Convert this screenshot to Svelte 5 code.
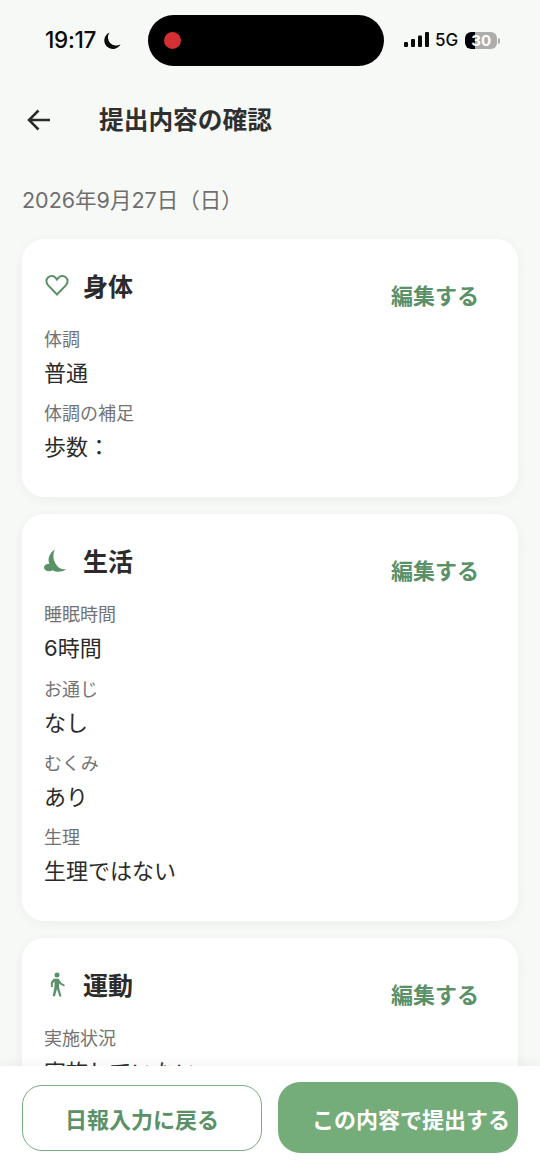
<script>
  const sections = [
    { title: '身体', icon: 'heart', rows: [['体調', '普通'], ['体調の補足', '歩数：']] },
    { title: '生活', icon: 'moon', rows: [['睡眠時間', '6時間'], ['お通じ', 'なし'], ['むくみ', 'あり'], ['生理', '生理ではない']] },
    { title: '運動', icon: 'walk', rows: [['実施状況', '実施していない']] }
  ];
</script>

<div class="screen">
  <div class="status">
    <div class="time">19:17
      <svg class="moon" viewBox="0 0 20 20" width="20" height="20"><path d="M7.5 1.5A8.6 8.6 0 1 0 18.6 13.2 8.2 8.2 0 0 1 7.5 1.5Z" fill="#0b0b0b"/></svg>
    </div>
    <div class="island"><span class="rec"></span></div>
    <div class="right">
      <svg viewBox="0 0 25 16" width="25" height="16"><rect x="0" y="10" width="4" height="5" rx="1"/><rect x="7" y="7" width="4" height="8" rx="1"/><rect x="14" y="3.5" width="4" height="11.5" rx="1"/><rect x="21" y="0" width="4" height="15" rx="1"/></svg>
      <span class="fiveg">5G</span>
      <div class="battery"><span class="level"></span><span class="pct">30</span></div>
      <span class="nub"></span>
    </div>
  </div>

  <div class="header">
    <svg class="back" viewBox="0 0 26 24" width="26" height="24" fill="none" stroke="#2b2b2b" stroke-width="2.5"><path d="M24 12H3M12.5 2.5 3 12l9.5 9.500"/></svg>
    <h1>提出内容の確認</h1>
  </div>

  <div class="content">
    <div class="date">2026年9月27日（日）</div>
    {#each sections as s}
      <section class="card">
        <div class="card-head">
          <div class="title">
            <span class="icon">
              {#if s.icon === 'heart'}
                <svg class="heart" viewBox="0 0 24 24" width="24" height="24" fill="none" stroke="#5a9168" stroke-width="2"><path d="M12 21.500 3.200 12.400C.8 9.900.9 6.200 3.200 4.200c2.300-2 5.900-1.500 7.500.7L12 6.600l1.300-1.700c1.600-2.200 5.200-2.700 7.500-.7 2.300 2 2.400 5.700 0 8.200Z"/></svg>
              {:else if s.icon === 'moon'}
                <svg viewBox="0 0 24 24" width="24" height="24" fill="#5a9168"><path d="M11 1.500C6 4.500 3.500 10 5 15l4 7.500c3.500 2 9 1.500 13.500-1.300-5 .8-8-1.200-10.500-5-3-4.200-3.500-9.500-1-15.200Z"/><ellipse cx="5" cy="19.500" rx="5" ry="3.800"/></svg>
              {:else}
                <svg class="walk" viewBox="0 0 24 30" width="20" height="27" fill="#5a9168"><circle cx="12" cy="3.500" r="3"/><path d="M8 8h6l3 5 4.500 2.500-1 1.800-5.500-3-.5-1v6l3 10h-2.600L12 20.500 9.500 29H6.800L9 18v-6.500l-2 2V18H4.700v-6Z"/></svg>
              {/if}
            </span>
            <h2>{s.title}</h2>
          </div>
          <span class="edit">編集する</span>
        </div>
        <div class="rows">
          {#each s.rows as [label, value]}
            <div class="row">
              <div class="label">{label}</div>
              <div class="value">{value}</div>
            </div>
          {/each}
        </div>
      </section>
    {/each}
  </div>

  <div class="footer">
    <button class="btn ghost">日報入力に戻る</button>
    <button class="btn primary">この内容で提出する</button>
  </div>
</div>

<style>
  :global(body) { margin: 0; background: #f7f9f7; }
  .screen {
    width: 540px; height: 1170px; overflow: hidden; display: flex; flex-direction: column;
    background: #f7f9f7; color: #2b2b2b;
    font-family: Inter, "Noto Sans CJK JP", "Noto Sans", sans-serif;
  }
  .status { display: flex; align-items: center; height: 51px; margin-top: 15px; flex: none; }
  .time {
    display: flex; align-items: center; gap: 6px; width: 148px; box-sizing: border-box; padding-left: 45px; flex: none;
    font: 500 22.500px/1 Inter, "Noto Sans", sans-serif; color: #0b0b0b; white-space: nowrap; letter-spacing: -0.3px;
  }
  .moon { flex: none; }
  .island { width: 236px; height: 51px; border-radius: 26px; background: #000; display: flex; align-items: center; padding-left: 16px; box-sizing: border-box; flex: none; }
  .rec { width: 17px; height: 17px; border-radius: 50%; background: #d42f33; }
  .right { display: flex; align-items: center; margin-left: 20px; color: #0b0b0b; }
  .right svg { fill: #0b0b0b; margin-top: -1px; }
  .fiveg { font: 500 17px/1 Inter, sans-serif; margin-left: 6px; }
  .battery { position: relative; width: 32px; height: 17px; border-radius: 6px; margin-left: 7px; background: #adadad; overflow: hidden; }
  .level { position: absolute; left: 0; top: 0; bottom: 0; width: 10px; background: #000; border-radius: 6px 0 0 6px; }
  .pct { position: absolute; inset: 0; text-align: center; font: 700 15px/17px Inter, sans-serif; color: #fff; }
  .nub { width: 2px; height: 6px; background: #adadad; border-radius: 0 2px 2px 0; margin-left: 1px; }

  .header { display: flex; align-items: center; height: 40px; margin-top: 34px; padding-left: 26px; flex: none; }
  .back { flex: none; }
  h1 { margin: 0 0 0 47px; font-size: 24.700px; line-height: 36px; font-weight: 700; color: #2f2f2f; }

  .content { flex: 1; min-height: 0; overflow: hidden; padding: 0 22px; }
  .date { margin-top: 44px; font-size: 21.500px; line-height: 32px; color: #6f6f6f; margin-bottom: 23px; white-space: nowrap; }
  .card { background: #fff; border-radius: 22px; padding: 30px 22px 32px; margin-bottom: 17px; box-shadow: 0 2px 12px rgba(40, 60, 45, 0.05); }
  .card-head { display: flex; justify-content: space-between; align-items: flex-start; height: 43px; padding-right: 17px; }
  .title { display: flex; align-items: center; height: 36px; }
  .icon { width: 39px; height: 30px; display: flex; align-items: center; margin-top: -4px; }
  .heart { margin-left: 1px; }
  .walk { margin-left: 3px; }
  h2 { margin: 0; font-size: 25px; line-height: 36px; font-weight: 700; color: #2b2b2b; }
  .edit { font-size: 22px; line-height: 32px; font-weight: 700; color: #5a9168; margin-top: 11px; }
  .rows { display: flex; flex-direction: column; gap: 9.300px; margin-top: 14px; }
  .label { font-size: 18px; line-height: 28px; color: #737373; margin-bottom: 1px; }
  .value { font-size: 22px; line-height: 36px; color: #2b2b2b; }

  .footer {
    flex: none; height: 104px; box-sizing: border-box; background: #fff; display: flex; align-items: flex-start; gap: 16px;
    padding: 16px 22px 0; position: relative; box-shadow: 0 -3px 10px rgba(40, 60, 45, 0.05);
  }
  .btn { width: 240px; font: 700 22px/1 "Noto Sans CJK JP", sans-serif; border-radius: 22px; white-space: nowrap; }
  .ghost { height: 66px; margin-top: 3px; background: #fff; border: 1.500px solid #78ad80; color: #5a9168; border-radius: 20px; }
  .primary { height: 71px; background: #74ad7a; border: 0; color: #fff; padding: 0 0 0 34px; text-align: left; }
</style>
